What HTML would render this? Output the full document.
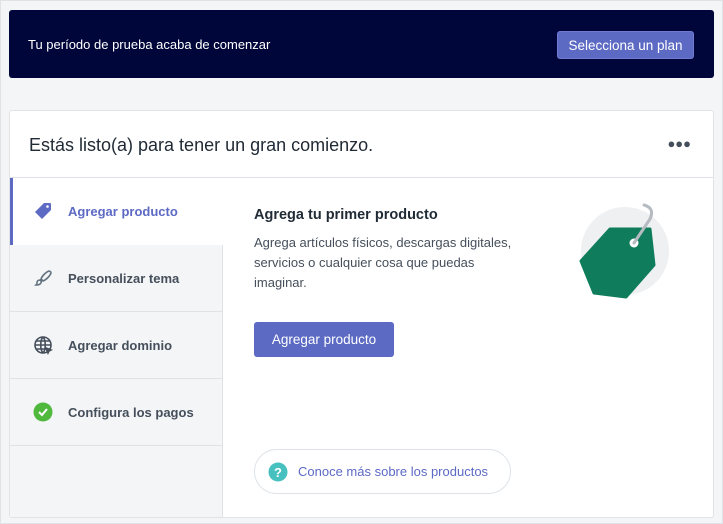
<!DOCTYPE html>
<html><head><style>
*{margin:0;padding:0;box-sizing:border-box}
html,body{width:723px;height:524px;overflow:hidden}
body{background:#f4f5f7;font-family:"Liberation Sans",sans-serif;position:relative}
.frame{position:absolute;left:0;top:0;width:723px;height:524px;border:1px solid #dfe3e8}
.banner{position:absolute;left:9px;top:10px;width:705px;height:68px;background:#000639;border-radius:3px}
.banner .t{position:absolute;left:19px;top:27px;color:#fff;font-size:13px}
.banner .b{position:absolute;left:548px;top:21px;width:137px;height:28px;background:#5c6ac4;border-radius:3px;color:#fff;font-size:13.5px;line-height:28px;text-align:center;border:1px solid #6f7bd0}
.card{position:absolute;left:9px;top:110px;width:705px;height:408px;background:#fff;border:1px solid #e1e3e5;border-radius:3px;overflow:hidden}
.h{position:absolute;left:19px;top:24px;font-size:18px;color:#212b36}
.dots{position:absolute;right:22px;top:25px;font-size:13px;color:#454f5b;letter-spacing:0px;font-weight:bold}
.hr{position:absolute;left:0;right:0;top:66px;border-top:1px solid #dfe3e8}
.side{position:absolute;left:0;top:67px;width:213px;height:360px;background:#f4f5f7;border-right:1px solid #dfe3e8}
.it{position:absolute;left:0;width:213px;height:67px;border-bottom:1px solid #dfe3e8;font-size:13px;font-weight:bold;color:#454f5b}
.it span{position:absolute;left:58px;top:26px}
.it svg{position:absolute;left:23px;top:23px}
.act{background:#fff;border-left:3px solid #5c6ac4;color:#5c6ac4;border-bottom:none}
.act span{left:55px}.act svg{left:20px}
</style></head><body>
<div class="frame"></div>
<div class="banner"><div class="t">Tu período de prueba acaba de comenzar</div><div class="b">Selecciona un plan</div></div>
<div class="card">
<div class="h">Estás listo(a) para tener un gran comienzo.</div>
<div class="dots">●●●</div>
<div class="hr"></div>
<div class="side">
<div class="it act" style="top:0"><svg width="20" height="20" viewBox="0 0 20 20"><path d="M11 2h6a1 1 0 0 1 1 1v6l-9 9-7-7z" fill="#5c6ac4"/><circle cx="14.5" cy="5.5" r="1.3" fill="#fff"/></svg><span>Agregar producto</span></div>
<div class="it" style="top:67px"><svg width="20" height="20" viewBox="0 0 20 20" fill="none" stroke="#637381" stroke-width="1.6"><path d="M16 3c-3 1-7 5-8 8l2 2c3-1 7-5 8-8 0-1-1-2-2-2zM7 12c-2 0-3 1-3 3 0 1-1 2-1 2s3 0 4-1 2-2 1-3z"/></svg><span>Personalizar tema</span></div>
<div class="it" style="top:134px"><svg width="20" height="20" viewBox="0 0 20 20" fill="none" stroke="#454f5b" stroke-width="1.6"><circle cx="10" cy="10" r="8"/><path d="M2 10h16M10 2c-3 3-3 13 0 16M10 2c3 3 3 13 0 16M3 6h14M3 14h14"/><path d="M13 13l5 2-2 1-1 2z" fill="#454f5b"/></svg><span>Agregar dominio</span></div>
<div class="it" style="top:201px"><svg width="20" height="20" viewBox="0 0 20 20"><circle cx="10" cy="10" r="9.5" fill="#50b83c"/><path d="M6 10l3 3 5-6" stroke="#fff" stroke-width="2" fill="none"/></svg><span>Configura los pagos</span></div>
</div>
<div style="position:absolute;left:244px;top:96px;font-size:14.5px;font-weight:bold;color:#212b36">Agrega tu primer producto</div>
<div style="position:absolute;left:244px;top:122px;width:268px;font-size:13px;line-height:20px;color:#454f5b">Agrega artículos físicos, descargas digitales, servicios o cualquier cosa que puedas imaginar.</div>
<div style="position:absolute;left:244px;top:211px;width:140px;height:35px;background:#5c6ac4;border-radius:3px;color:#fff;font-size:13.5px;line-height:35px;text-align:center">Agregar producto</div>
<svg style="position:absolute;left:562px;top:82px" width="100" height="110" viewBox="0 0 100 110"><circle cx="53" cy="58" r="44" fill="#eff0f2"/><path d="M9 68 L38 36 L78 36 L82 72 L54 104 L22 100 Z" fill="#0f7d5b" stroke="#0f7d5b" stroke-width="3" stroke-linejoin="round"/><circle cx="62" cy="50" r="4.5" fill="#fff"/><path d="M62 50 L78 26 Q83 15 72 12" fill="none" stroke="#b5bbc1" stroke-width="3" stroke-linecap="round"/></svg>
<div style="position:absolute;left:244px;top:338px;width:257px;height:45px;border:1px solid #dfe3e8;border-radius:23px">
<svg style="position:absolute;left:13px;top:12px" width="20" height="20" viewBox="0 0 20 20"><circle cx="10" cy="10" r="9.5" fill="#47c1bf"/><text x="10" y="15" font-size="13" font-weight="bold" fill="#fff" text-anchor="middle" font-family="Liberation Sans">?</text></svg>
<span style="position:absolute;left:43px;top:14px;font-size:13px;color:#5c6ac4">Conoce más sobre los productos</span></div>
</div>
</body></html>
